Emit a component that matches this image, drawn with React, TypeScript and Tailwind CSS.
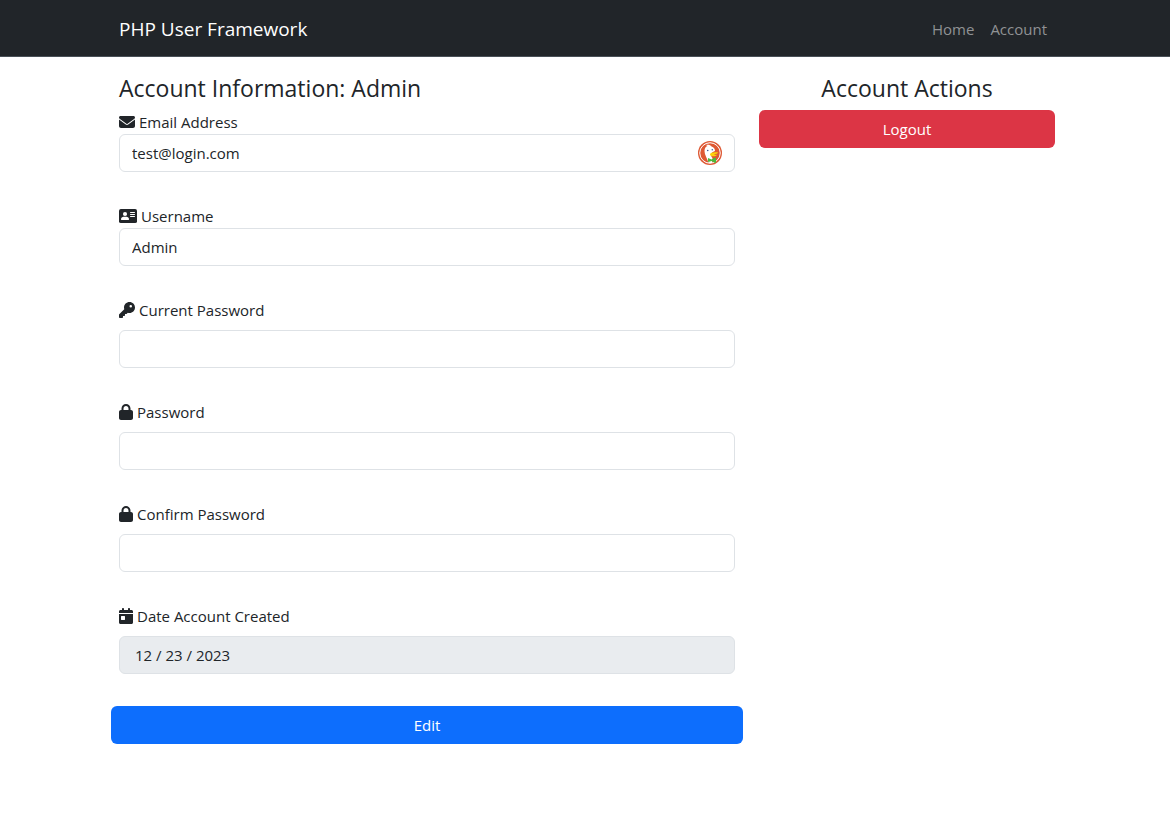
import React from 'react';
import { FaEnvelope, FaKey, FaLock, FaCalendarDay } from 'react-icons/fa6';

const fieldClass =
  'block w-full h-[38px] rounded-md border border-[#dee2e6] bg-white px-3 text-[15px] text-[#212529] disabled:bg-[#e9ecef] disabled:px-[15px] disabled:opacity-100';

type FieldProps = {
  id: string;
  label: string;
  icon: React.ReactNode;
  type?: string;
  value?: string;
  tight?: boolean;
  disabled?: boolean;
  adornment?: React.ReactNode;
};

function Field({ id, label, icon, type = 'text', value, tight, disabled, adornment }: FieldProps) {
  return (
    <div className="mb-8">
      <label
        htmlFor={id}
        className={tight ? 'flex h-6 items-center gap-1' : 'mb-2 flex h-6 items-center gap-1'}
      >
        {icon}
        <span>{label}</span>
      </label>
      <div className="relative">
        <input id={id} type={type} defaultValue={value} disabled={disabled} className={fieldClass} />
        {adornment}
      </div>
    </div>
  );
}

function CardIcon() {
  return (
    <svg viewBox="0 0 576 512" className="h-4 w-[18px]" aria-hidden="true">
      <rect y="32" width="576" height="448" rx="60" fill="currentColor" />
      <g fill="#fff">
        <circle cx="192" cy="192" r="66" />
        <path d="M64 368c0-53 38-88 84-88h88c46 0 84 35 84 88 0 9-7 16-16 16H80c-9 0-16-7-16-16z" />
        <rect x="352" y="128" width="160" height="32" rx="16" />
        <rect x="352" y="192" width="160" height="32" rx="16" />
        <rect x="352" y="256" width="160" height="32" rx="16" />
      </g>
    </svg>
  );
}

function DuckIcon() {
  return (
    <svg viewBox="0 0 48 48" className="absolute top-[7px] right-[13px] size-6" aria-hidden="true">
      <circle cx="24" cy="24" r="24" fill="#de5833" />
      <circle cx="24" cy="24" r="20.5" fill="#de5833" stroke="#fff" strokeWidth="2" />
      <path
        d="M21 43c-3-8-8-16-8-23 0-6 3-9 6-10l-3-2c5-1 9 0 11 3 5 1 7 5 7 9-5 2-8 4-8 7 0 3 1 5 3 7l-1 10c-3 0-5 0-7-1z"
        fill="#fff"
      />
      <circle cx="19.5" cy="19" r="1.5" fill="#2d4f8e" />
      <circle cx="28.5" cy="17.5" r="1.4" fill="#2d4f8e" />
      <path d="M24 27c0-3 4-4 7-4 3-1 8-1 9 0 0 2-5 3-8 4 2 1 5 0 6 1-2 3-8 3-11 2-2-1-3-1-3-3z" fill="#fdd20a" />
      <path d="M20 34l7 3 7-4 2 1v9l-2 1-7-4-6 2-1-1z" fill="#4cba3c" />
    </svg>
  );
}

export default function App() {
  return (
    <div className="min-h-screen bg-white font-['Open_Sans','Noto_Sans',sans-serif] text-[15px] leading-6 text-[#212529]">
      <header className="border-b border-[#495057] bg-[#212529]">
        <nav className="mx-auto flex h-14 max-w-[964px] items-center justify-between pt-0.5 pr-3 pl-4">
          <a href="#" className="text-[19px] text-white">
            PHP User Framework
          </a>
          <div className="flex gap-4 pr-2 text-[#909294]">
            <a href="#">Home</a>
            <a href="#">Account</a>
          </div>
        </nav>
      </header>
      <main className="mx-auto grid max-w-[964px] grid-cols-12 gap-6 pt-4 pr-3 pl-4">
        <form className="col-span-8" onSubmit={(e) => e.preventDefault()}>
          <h1 className="mb-1.5 text-[23px] leading-[31px]">Account Information: Admin</h1>
          <Field
            id="email"
            label="Email Address"
            type="email"
            value="test@login.com"
            tight
            icon={<FaEnvelope className="h-4 w-4" />}
            adornment={<DuckIcon />}
          />
          <Field id="username" label="Username" value="Admin" tight icon={<CardIcon />} />
          <Field id="current" label="Current Password" type="password" icon={<FaKey className="h-4 w-4" />} />
          <Field id="password" label="Password" type="password" icon={<FaLock className="h-4 w-3.5" />} />
          <Field id="confirm" label="Confirm Password" type="password" icon={<FaLock className="h-4 w-3.5" />} />
          <Field
            id="created"
            label="Date Account Created"
            value="12 / 23 / 2023"
            disabled
            icon={<FaCalendarDay className="h-4 w-3.5" />}
          />
          <div className="-mx-2">
            <button type="submit" className="h-[38px] w-full rounded-md bg-[#0d6efd] text-white">
              Edit
            </button>
          </div>
        </form>
        <aside className="col-span-4">
          <h2 className="mb-1.5 text-center text-[23px] leading-[31px]">Account Actions</h2>
          <button type="button" className="h-[38px] w-full rounded-md bg-[#dc3545] text-white">
            Logout
          </button>
        </aside>
      </main>
    </div>
  );
}
